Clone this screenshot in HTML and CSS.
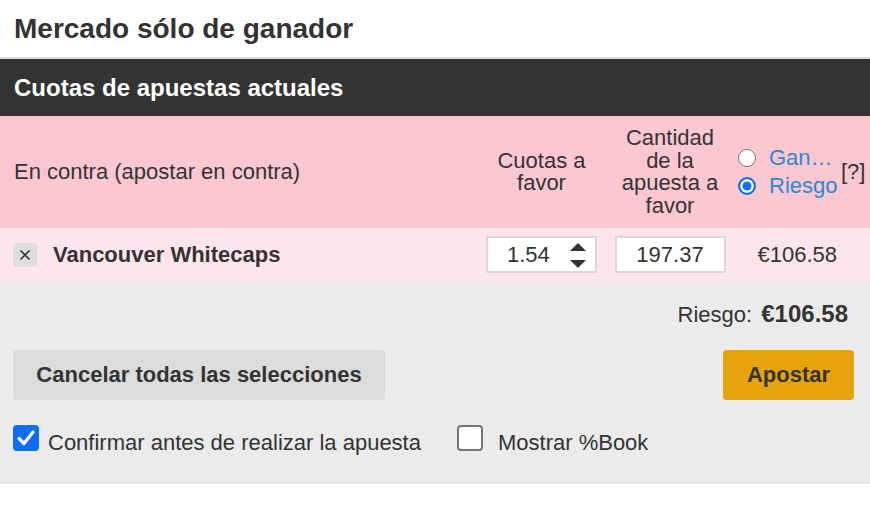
FILE: index.html
```html
<!DOCTYPE html>
<html lang="es">
<head>
    <meta charset="UTF-8">
    <meta name="viewport" content="width=device-width, initial-scale=1.0">
    <title>Mercado sólo de ganador</title>
    <link rel="stylesheet" href="styles.css">
</head>
<body>
    <h1 class="market-title">Mercado sólo de ganador</h1>

    <section class="betslip">
        <h2 class="betslip-head">Cuotas de apuestas actuales</h2>

        <!-- Cabecera de columnas -->
        <div class="cols cols-head">
            <div class="col-name">En contra (apostar en contra)</div>
            <div class="col-center">Cuotas a<br>favor</div>
            <div class="col-center">Cantidad<br>de la<br>apuesta a<br>favor</div>
            <div class="mode">
                <label class="radio-row">
                    <span class="radio"></span>
                    <span class="link">Gan…</span>
                </label>
                <label class="radio-row">
                    <span class="radio checked"></span>
                    <span class="link">Riesgo</span>
                </label>
            </div>
            <div class="help">[?]</div>
        </div>

        <!-- Selección -->
        <div class="cols cols-row">
            <div class="col-name">
                <button class="remove" type="button">
                    <svg width="12" height="12" viewBox="0 0 12 12">
                        <path d="M1.5 1.5 L10.5 10.5 M10.5 1.5 L1.5 10.5" stroke="#333" stroke-width="1.6" fill="none"/>
                    </svg>
                </button>
                <span class="runner">Vancouver Whitecaps</span>
            </div>
            <div class="col-center">
                <div class="field odds">
                    <span>1.54</span>
                    <svg class="spin" width="16" height="26" viewBox="0 0 16 26">
                        <path d="M8 0 L16 8 L0 8 Z" fill="#333"/>
                        <path d="M0 17 L16 17 L8 25 Z" fill="#333"/>
                    </svg>
                </div>
            </div>
            <div class="col-center">
                <div class="field">197.37</div>
            </div>
            <div class="liability">€106.58</div>
        </div>

        <div class="footer">
            <div class="total">Riesgo: <strong>€106.58</strong></div>

            <div class="actions">
                <button class="btn btn-cancel" type="button">Cancelar todas las selecciones</button>
                <button class="btn btn-bet" type="button">Apostar</button>
            </div>

            <div class="options">
                <label class="check-row">
                    <span class="check checked">
                        <svg width="20" height="18" viewBox="0 0 20 18">
                            <path d="M3 9.5 L8 14.5 L17 3" stroke="#fff" stroke-width="3.2" fill="none" stroke-linecap="round" stroke-linejoin="round"/>
                        </svg>
                    </span>
                    <span class="check-text">Confirmar antes de realizar la apuesta</span>
                </label>
                <label class="check-row wide">
                    <span class="check"></span>
                    <span class="check-text">Mostrar %Book</span>
                </label>
            </div>
        </div>
    </section>
</body>
</html>
```

FILE: styles.css
```css
:root {
    --text: #333;
    --pink: #fbc8d2;
    --pink-light: #fde6eb;
    --grey: #ebebeb;
    --blue: #0b6ef5;
    --link: #2b88d6;
}

* {
    margin: 0;
    padding: 0;
    box-sizing: border-box;
}

body {
    font-family: "Liberation Sans", Arial, sans-serif;
    color: var(--text);
    background: #fff;
    font-size: 22px;
}

.market-title {
    height: 59px;
    line-height: 57px;
    padding-left: 14px;
    font-size: 28px;
    font-weight: bold;
    border-bottom: 2px solid #dcdcdc;
}

.betslip-head {
    height: 57px;
    line-height: 57px;
    padding-left: 14px;
    background: #333;
    color: #fff;
    font-size: 24px;
    font-weight: bold;
}

/* Rejilla de columnas compartida */
.cols {
    display: grid;
    grid-template-columns: 478px 127px 130px 105px 30px;
    align-items: center;
}

.cols-head {
    height: 112px;
    background: var(--pink);
    line-height: 22.5px;
}

.col-name {
    padding-left: 14px;
    display: flex;
    align-items: center;
}

.col-center {
    text-align: center;
    display: flex;
    flex-direction: column;
    align-items: center;
}

.mode {
    display: flex;
    flex-direction: column;
    gap: 6px;
    padding-left: 3px;
}

.radio-row {
    display: flex;
    align-items: center;
    gap: 13px;
}

.radio {
    width: 18px;
    height: 18px;
    border-radius: 50%;
    border: 1.5px solid #767676;
    background: #fff;
}

.radio.checked {
    border: 2px solid var(--blue);
    box-shadow: inset 0 0 0 2.5px #fff;
    background: var(--blue);
}

.link {
    color: var(--link);
}

.help {
    padding-left: 1px;
}

.cols-row {
    height: 53px;
    background: var(--pink-light);
}

.remove {
    width: 24px;
    height: 24px;
    border: none;
    border-radius: 3px;
    background: #dedede;
    display: flex;
    align-items: center;
    justify-content: center;
    margin-left: -1px;
}

.runner {
    font-weight: bold;
    margin-left: 16px;
}

.field {
    width: 111px;
    height: 37px;
    border: 2px solid #d8d8d8;
    background: #fff;
    display: flex;
    align-items: center;
    justify-content: center;
}

.odds {
    justify-content: flex-start;
    padding-left: 19px;
    position: relative;
}

.odds .spin {
    position: absolute;
    right: 9px;
    top: 5px;
}

.liability {
    grid-column: 4 / 6;
    text-align: right;
    padding-right: 33px;
}

.footer {
    background: var(--grey);
    padding: 20px 16px 28px 13px;
}

.total {
    height: 26px;
    text-align: right;
    padding-right: 6px;
    line-height: 26px;
}

.total strong {
    font-size: 24px;
    margin-left: 3px;
}

.actions {
    display: flex;
    justify-content: space-between;
    margin-top: 23px;
}

.btn {
    height: 50px;
    border: none;
    border-radius: 4px;
    font-family: inherit;
    font-size: 22px;
    font-weight: bold;
    color: var(--text);
}

.btn-cancel {
    width: 372px;
    background: #dcdcdc;
}

.btn-bet {
    width: 131px;
    background: #e6a30c;
}

.options {
    display: flex;
    margin-top: 25px;
}

.check-row {
    display: flex;
    align-items: flex-start;
    gap: 9px;
}

.check-row.wide {
    margin-left: 36px;
    gap: 15px;
}

.check-text {
    margin-top: 5px;
}

.check {
    width: 26px;
    height: 26px;
    border-radius: 4px;
    border: 2px solid #767676;
    background: #fff;
    display: flex;
    align-items: center;
    justify-content: center;
}

.check.checked {
    border: none;
    background: var(--blue);
}
```
